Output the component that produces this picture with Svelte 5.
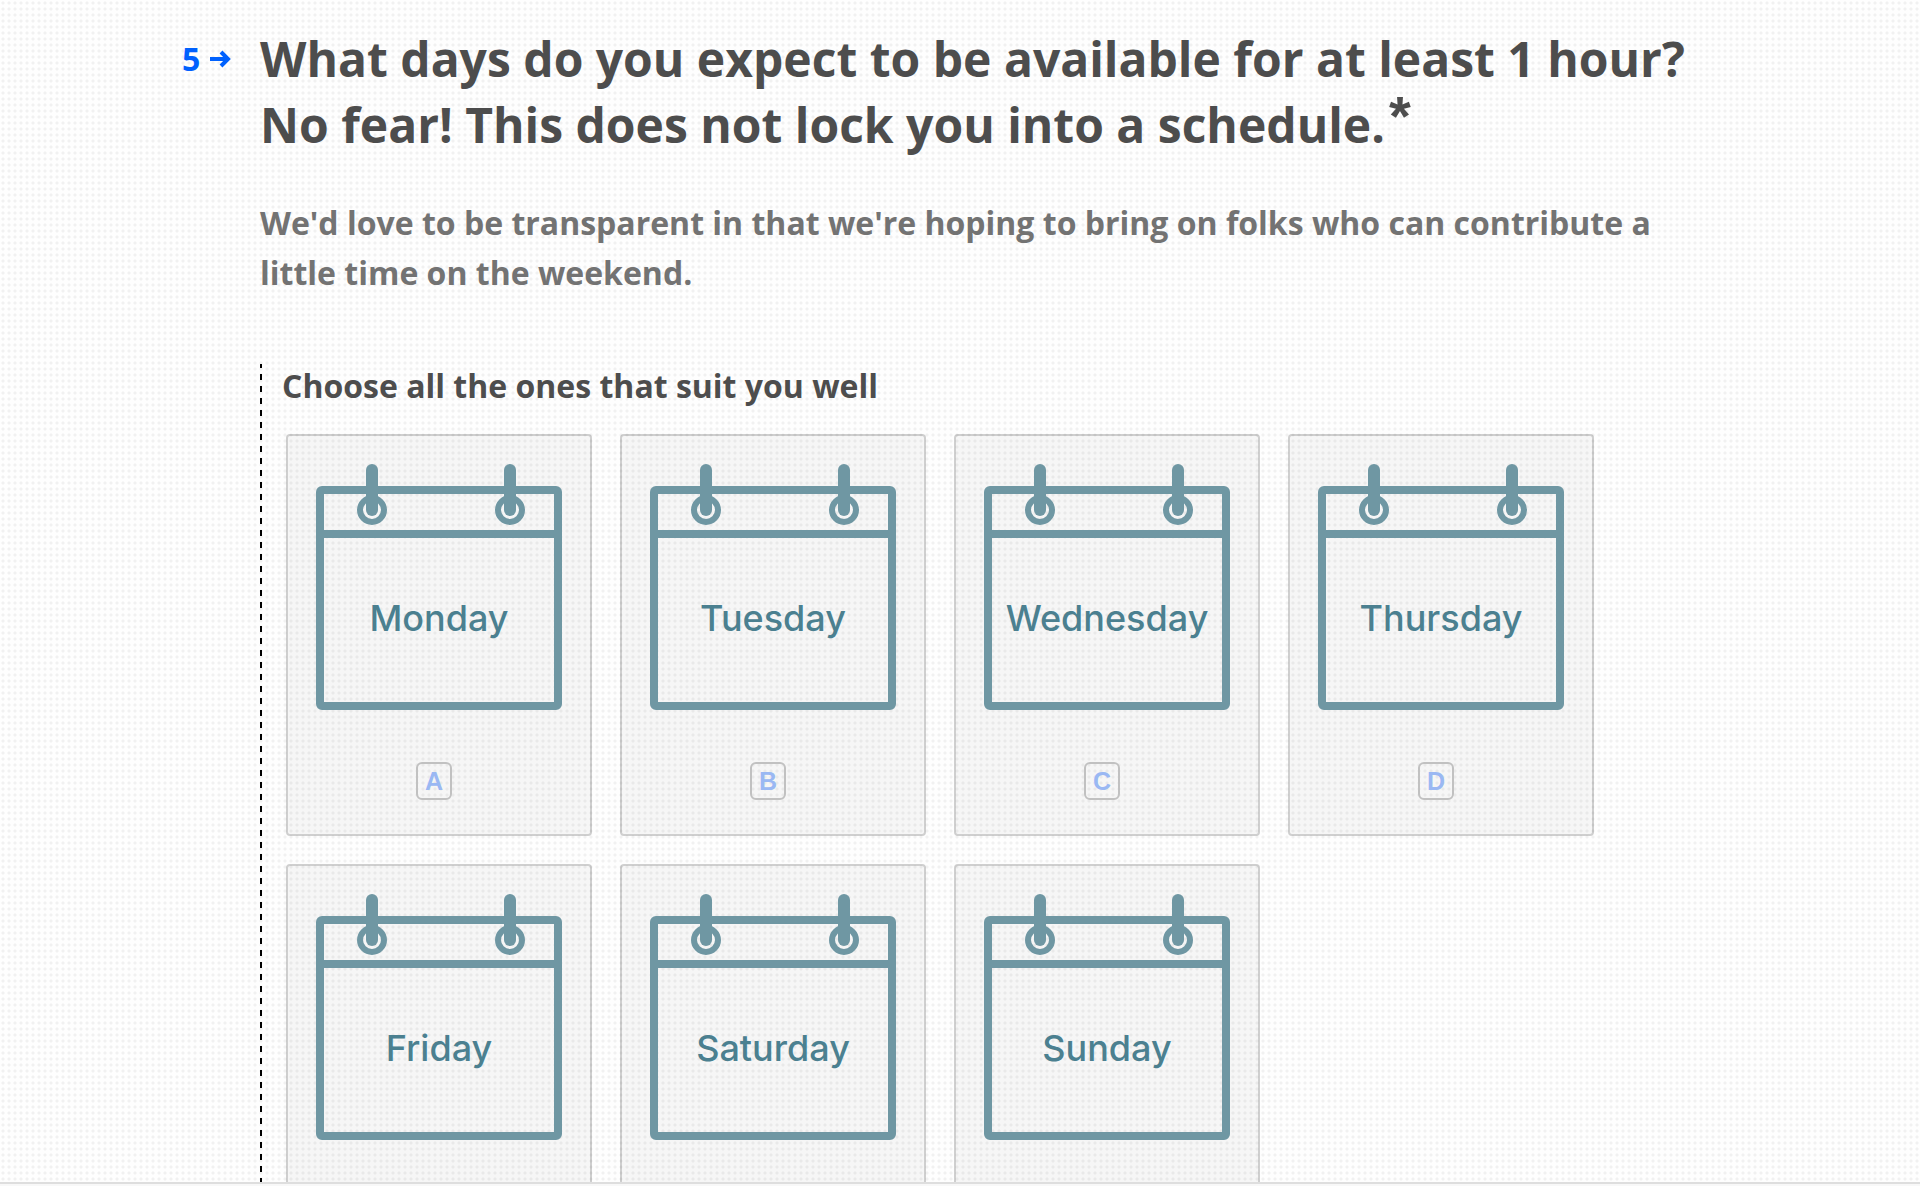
<script>
  const days = ['Monday', 'Tuesday', 'Wednesday', 'Thursday', 'Friday', 'Saturday', 'Sunday'];

  const choices = days.map((day, i) => ({
    day,
    key: String.fromCharCode(65 + i),
  }));

  let selected = $state([]);
</script>

<main class="form">
  <section class="question">
    <div class="number">
      <span>5</span>
      <svg class="arrow" viewBox="0 0 22 18" aria-hidden="true">
        <path d="M0 10h18M11 3l7 7-7 7" />
      </svg>
    </div>

    <div class="content">
      <h1>
        What days do you expect to be available for at least 1 hour?
        No fear! This does not lock you into a schedule.<span class="required">*</span>
      </h1>
      <p class="description">
        We'd love to be transparent in that we're hoping to bring on folks who can contribute a
        little time on the weekend.
      </p>

      <fieldset>
        <legend>Choose all the ones that suit you well</legend>
        <div class="choices">
          {#each choices as { day, key } (key)}
            <label class="card">
              <input type="checkbox" value={day} bind:group={selected} />
              <svg class="calendar" viewBox="0 0 246 246" aria-hidden="true">
                <rect class="frame" x="4" y="26" width="238" height="216" rx="2" />
                <path class="frame" d="M8 70h230" />
                {#each [56, 194] as x}
                  <circle class="ring" cx={x} cy="46" r="12" />
                  <path class="hook" d="M{x} 6v40" />
                {/each}
                <text x="123" y="167">{day}</text>
              </svg>
              <kbd>{key}</kbd>
            </label>
          {/each}
        </div>
      </fieldset>
    </div>
  </section>
</main>

<style>
  :global(body) {
    background: #f8f8f8;
  }

  .form {
    box-sizing: border-box;
    height: calc(100vh - 2px);
    overflow: hidden;
    padding: 26px 180px 0;
    border-bottom: 2px solid #dedede;
    background-color: #fefefe;
    background-image: radial-gradient(circle, #f1f1f1 1px, transparent 2px);
    background-size: 6px 6px;
    color: #4d4d4d;
    font-family: 'Open Sans', sans-serif;
    font-weight: 700;
  }

  .question {
    display: flex;
    align-items: flex-start;
  }

  .number {
    box-sizing: border-box;
    display: flex;
    flex-shrink: 0;
    align-items: center;
    gap: 10px;
    width: 80px;
    height: 64px;
    padding-left: 2px;
    color: #0061fe;
    font-size: 32px;
  }

  .arrow {
    width: 22px;
    height: 18px;
    overflow: visible;
    fill: none;
    stroke: currentColor;
    stroke-width: 4;
  }

  .content {
    flex: 1;
  }

  h1 {
    max-width: 1440px;
    margin: 0;
    font-size: 48px;
    line-height: 66px;
  }

  .required {
    margin-left: 4px;
    font-family: 'Liberation Sans', sans-serif;
    font-size: 56px;
    line-height: 0;
    vertical-align: 8px;
  }

  .description {
    max-width: 1420px;
    margin: 40px 0 0;
    color: #737373;
    font-size: 32px;
    line-height: 50px;
  }

  /* the dashed rule on the left is painted as a background strip */
  fieldset {
    min-width: 0;
    margin: 66px 0 0;
    padding: 0 0 0 26px;
    border: 0;
    background: repeating-linear-gradient(#000 0 4px, transparent 4px 10px, #000 10px 12px) 0 0 / 2px 100% no-repeat;
  }

  legend {
    float: left;
    width: 100%;
    margin-left: -4px;
    padding: 0;
    font-size: 32px;
    line-height: 44px;
  }

  .choices {
    clear: both;
    display: flex;
    flex-wrap: wrap;
    gap: 28px;
    max-width: 1308px;
    padding-top: 26px;
  }

  .card {
    box-sizing: border-box;
    display: flex;
    flex-direction: column;
    align-items: center;
    width: 306px;
    height: 402px;
    padding-top: 28px;
    border: 2px solid rgba(0, 0, 0, 0.16);
    border-radius: 4px;
    background: rgba(0, 0, 0, 0.03);
    cursor: pointer;
  }

  .card:hover {
    background: rgba(0, 0, 0, 0.05);
  }

  .card:focus-within {
    border-color: #0061fe;
  }

  .card:has(input:checked) {
    border-color: #0061fe;
  }

  input {
    position: absolute;
    opacity: 0;
    pointer-events: none;
  }

  .calendar {
    display: block;
    width: 246px;
    height: 246px;
  }

  .frame,
  .ring,
  .hook {
    fill: none;
    stroke: #6f97a3;
  }

  .frame {
    stroke-width: 8;
  }

  .ring {
    stroke-width: 6;
  }

  .hook {
    stroke-width: 12;
    stroke-linecap: round;
  }

  text {
    fill: #4b8090;
    font-family: Inter, sans-serif;
    font-size: 36px;
    font-weight: 500;
    text-anchor: middle;
  }

  kbd {
    box-sizing: border-box;
    width: 36px;
    height: 38px;
    margin: 52px 10px 0 0;
    border: 2px solid #c1c1c1;
    border-radius: 6px;
    color: #9ab8f3;
    font-family: 'Liberation Sans', sans-serif;
    font-size: 25px;
    font-weight: 700;
    line-height: 34px;
    text-align: center;
  }
</style>
